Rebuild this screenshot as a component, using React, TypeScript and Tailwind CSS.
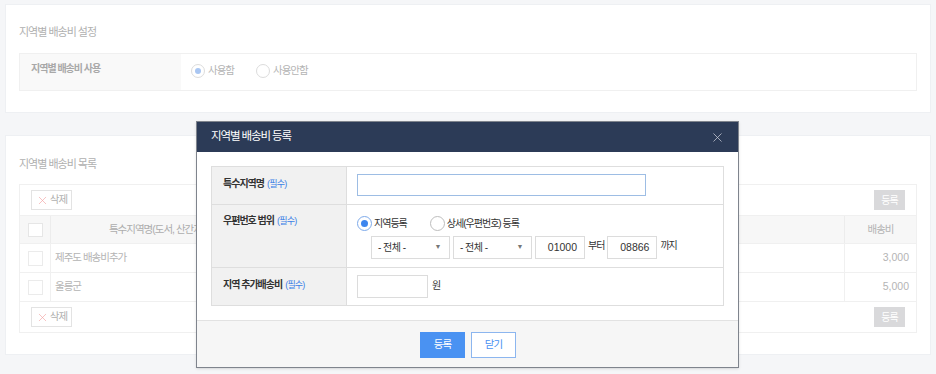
import { X } from "lucide-react";

const font = { fontFamily: '"Liberation Sans", "Noto Sans CJK KR", sans-serif' };

const rows = [
  { name: "제주도 배송비추가", fee: "3,000" },
  { name: "울릉군", fee: "5,000" },
];

function FadedRadio({ checked, label }: { checked?: boolean; label: string }) {
  return (
    <label className="flex items-center gap-[3px] text-[10.5px] tracking-[-1px] text-[#b4b4b4]">
      <span className="w-[14px] h-[14px] rounded-full border border-[#dcdcdc] bg-white flex items-center justify-center">
        {checked && <span className="w-[6px] h-[6px] rounded-full bg-[#a9c6f2]" />}
      </span>
      {label}
    </label>
  );
}

function Radio({ checked, label }: { checked?: boolean; label: string }) {
  return (
    <label className="flex items-center gap-[2px] text-[10px] tracking-[-1px] text-[#333]">
      <span
        className={
          "w-[15px] h-[15px] rounded-full border bg-white flex items-center justify-center " +
          (checked ? "border-[#7eaaea]" : "border-[#bdbdbd]")
        }
      >
        {checked && <span className="w-[7px] h-[7px] rounded-full bg-[#3d86ee]" />}
      </span>
      {label}
    </label>
  );
}

function DeleteButton() {
  return (
    <button className="h-[20px] w-[41px] border border-[#e3e3e3] bg-white flex items-center justify-center gap-[1px] text-[10.5px] tracking-[-1px] text-[#b0b0b0]">
      <X size={13} strokeWidth={1.2} className="text-[#f2a3a3]" />
      삭제
    </button>
  );
}

function GrayButton() {
  return (
    <button className="h-[20px] w-[31px] bg-[#d9d9db] text-white text-[10px] tracking-[-1px]">등록</button>
  );
}

function Select() {
  return (
    <div className="w-[79px] h-[23px] border border-[#dcdcdc] bg-white flex items-center justify-between pl-[6px] pr-[8px] text-[10px] tracking-[-0.5px] text-[#333]">
      <span>- 전체 -</span>
      <span className="text-[7px] text-[#777]">▼</span>
    </div>
  );
}

function Required() {
  return <span className="text-[9px] tracking-[-0.8px] text-[#3b80e6] font-normal ml-[3px]">(필수)</span>;
}

export default function App() {
  return (
    <div className="relative w-[936px] h-[374px] overflow-hidden bg-[#f5f6f8]" style={font}>
      <div className="px-[5px] pt-[4px] flex flex-col gap-[22px]">
        {/* 설정 */}
        <section className="h-[109px] bg-white border border-[#eef0f3] px-[13px] pt-[18px]">
          <h2 className="h-[18px] leading-[18px] text-[11px] tracking-[-1px] text-[#b0b0b0] mb-[12px]">지역별 배송비 설정</h2>
          <div className="flex h-[38px] border border-[#f0f0f0]">
            <div className="w-[161px] bg-[#f9f9f9] pl-[11px] pt-[7px] text-[10px] tracking-[-1px] font-bold text-[#a8a8a8]">
              지역별 배송비 사용
            </div>
            <div className="flex-1 flex items-center pl-[10px] gap-[22px] pb-[3px]">
              <FadedRadio checked label="사용함" />
              <FadedRadio label="사용안함" />
            </div>
          </div>
        </section>

        {/* 목록 */}
        <section className="h-[220px] bg-white border border-[#eef0f3] px-[13px] pt-[19px]">
          <h2 className="h-[18px] leading-[18px] text-[11px] tracking-[-1px] text-[#b0b0b0] mb-[11px]">지역별 배송비 목록</h2>
          <div className="border border-[#f0f0f0] text-[10.5px] tracking-[-1px] text-[#b4b4b4]">
            <div className="h-[31px] flex items-center justify-between px-[11px] border-b border-[#f0f0f0]">
              <DeleteButton />
              <GrayButton />
            </div>
            <div className="h-[28px] flex bg-[#f7f7f7] border-b border-[#f0f0f0]">
              <div className="w-[31px] flex items-center justify-center border-r border-[#ececec]">
                <span className="w-[15px] h-[14px] bg-white border border-[#e6e6e6]" />
              </div>
              <div className="w-[220px] flex items-center justify-center text-[#adadad]">특수지역명(도서, 산간지역)</div>
              <div className="flex-1 flex items-center justify-center">우편번호 범위</div>
              <div className="w-[72px] flex items-center justify-center border-l border-[#ececec]">배송비</div>
            </div>
            {rows.map((r) => (
              <div key={r.name} className="h-[29px] flex border-b border-[#f0f0f0]">
                <div className="w-[31px] flex items-center justify-center border-r border-[#f0f0f0]">
                  <span className="w-[15px] h-[15px] bg-white border border-[#ebebeb]" />
                </div>
                <div className="w-[220px] flex items-center pl-[4px]">{r.name}</div>
                <div className="flex-1" />
                <div className="w-[72px] flex items-center justify-end pr-[7px] tracking-normal border-l border-[#f0f0f0]">{r.fee}</div>
              </div>
            ))}
            <div className="h-[30px] flex items-center justify-between px-[11px]">
              <DeleteButton />
              <GrayButton />
            </div>
          </div>
        </section>
      </div>

      {/* 등록 모달 */}
      <div className="absolute left-[196px] top-[121px] w-[543px] h-[247px] border border-[#7f848d] bg-white flex flex-col shadow-sm">
        <div className="h-[30px] bg-[#2c3b57] flex items-center justify-between pl-[14px] pr-[13px]">
          <span className="text-[11.5px] tracking-[-1.1px] text-white">지역별 배송비 등록</span>
          <X size={15} strokeWidth={1.2} className="text-[#c9ced8]" />
        </div>
        <div className="px-[14px] pt-[14px] pb-[14px] border-b border-[#e2e2e2]">
          <div className="border border-[#dedede] text-[10px] tracking-[-1px]">
            <div className="flex h-[38px] border-b border-[#dedede]">
              <div className="w-[135px] bg-[#f1f1f1] border-r border-[#dedede] pl-[11px] pt-[9px] font-bold text-[#333]">
                특수지역명<Required />
              </div>
              <div className="flex-1 pl-[10px] pt-[7px]">
                <div className="w-[289px] h-[22px] border border-[#9dbde4] bg-white" />
              </div>
            </div>
            <div className="flex h-[63px] border-b border-[#dedede]">
              <div className="w-[135px] bg-[#f1f1f1] border-r border-[#dedede] pl-[11px] pt-[8px] font-bold text-[#333]">
                우편번호 범위<Required />
              </div>
              <div className="flex-1 pl-[10px] pt-[7px]">
                <div className="h-[22px] flex items-center gap-[23px]">
                  <Radio checked label="지역등록" />
                  <Radio label="상세(우편번호) 등록" />
                </div>
                <div className="flex items-start gap-[3px] ml-[14px] mt-[2px] text-[#333]">
                  <Select />
                  <Select />
                  <div className="w-[50px] h-[23px] border border-[#dcdcdc] flex items-center justify-end pr-[7px] text-[10.5px] tracking-normal">01000</div>
                  <span className="pt-[2px]">부터</span>
                  <div className="w-[50px] h-[23px] border border-[#dcdcdc] flex items-center justify-end pr-[7px] text-[10.5px] tracking-normal">08866</div>
                  <span className="pt-[2px]">까지</span>
                </div>
              </div>
            </div>
            <div className="flex h-[37px]">
              <div className="w-[135px] bg-[#f1f1f1] border-r border-[#dedede] pl-[11px] pt-[9px] font-bold text-[#333]">
                지역 추가배송비<Required />
              </div>
              <div className="flex-1 pl-[10px] pt-[7px] flex items-start gap-[4px]">
                <div className="w-[71px] h-[23px] border border-[#dcdcdc] bg-white" />
                <span className="text-[#333] pt-[3px]">원</span>
              </div>
            </div>
          </div>
        </div>
        <div className="flex-1 bg-[#f6f6f6] flex items-start justify-center gap-[6px] pt-[11px] pl-[1px]">
          <button className="w-[45px] h-[26px] bg-[#4a92f2] text-white text-[10.5px] tracking-[-1px]">등록</button>
          <button className="w-[45px] h-[26px] bg-white border border-[#8cb6ef] text-[#4a92f2] text-[10.5px] tracking-[-1px]">닫기</button>
        </div>
      </div>
    </div>
  );
}
